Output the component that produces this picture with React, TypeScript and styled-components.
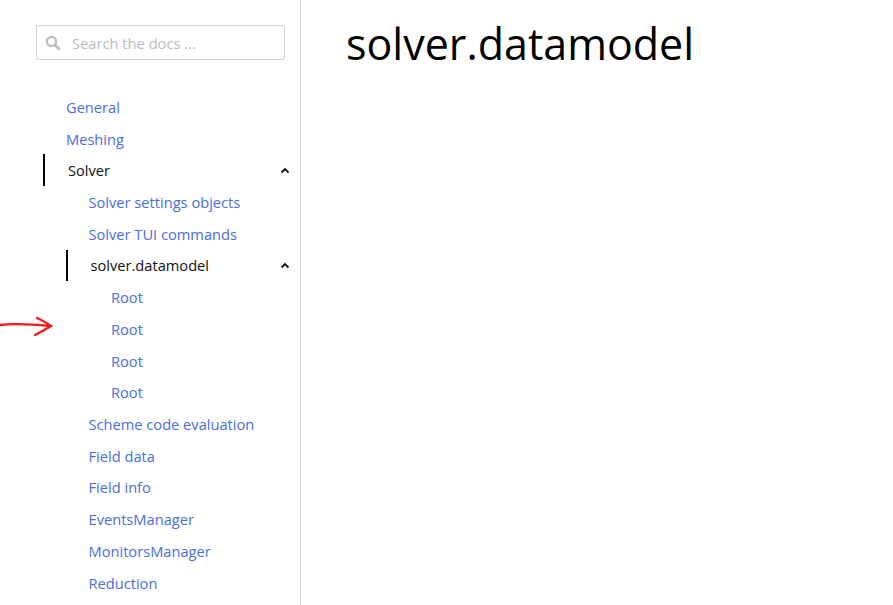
import styled, { createGlobalStyle } from "styled-components";

const GlobalStyle = createGlobalStyle`
  html, body {
    margin: 0;
    padding: 0;
    background: #fff;
    font-family: "Open Sans", "Noto Sans", sans-serif;
  }
`;

const Page = styled.div`
  display: flex;
  width: 893px;
  height: 605px;
  overflow: hidden;
  position: relative;
`;

const Sidebar = styled.aside`
  width: 300px;
  flex-shrink: 0;
  border-right: 1px solid #d0d0d0;
  box-sizing: content-box;
  padding-top: 25px;
`;

const SearchBox = styled.div`
  margin-left: 36px;
  width: 249px;
  height: 35px;
  box-sizing: border-box;
  border: 1px solid #cfcfcf;
  border-radius: 3px;
  display: flex;
  align-items: center;
  padding-left: 8px;
  gap: 11px;
`;

const SearchInput = styled.input`
  border: none;
  outline: none;
  font-family: inherit;
  font-size: 14.7px;
  color: #333;
  width: 180px;
  padding: 0;
  &::placeholder {
    color: #bcbcbc;
  }
`;

const NavList = styled.ul`
  list-style: none;
  margin: 31px 0 0 43px;
  padding: 0;
`;

const NavItem = styled.li<{ $level: number; $active?: boolean }>`
  height: 31.73px;
  display: flex;
  align-items: center;
  justify-content: space-between;
  margin-left: ${(p) => (p.$level - 1) * 22.5}px;
  border-left: 2px solid ${(p) => (p.$active ? "#000" : "transparent")};
  padding-left: ${(p) => (p.$active ? 23 : 21)}px;
  padding-right: 10px;
  font-size: 14.65px;
  color: ${(p) => (p.$active ? "#111" : "#4a6de2")};
  font-weight: ${(p) => (p.$active ? 500 : 400)};
`;

const Main = styled.main`
  flex: 1;
  padding-left: 45px;
`;

const Title = styled.h1`
  margin: 15px 0 0;
  font-size: 43px;
  font-weight: 400;
  line-height: 58px;
  color: #000;
`;

const Annotation = styled.svg`
  position: absolute;
  left: 0;
  top: 314px;
`;

const SearchIcon = () => (
  <svg width="16" height="16" viewBox="0 0 16 16">
    <circle cx="6.5" cy="6.5" r="4.6" fill="none" stroke="#bdbdbd" strokeWidth="2.4" />
    <line x1="10" y1="10" x2="14" y2="14" stroke="#bdbdbd" strokeWidth="2.8" strokeLinecap="round" />
  </svg>
);

const ChevronUp = () => (
  <svg width="10" height="7" viewBox="0 0 10 7">
    <polyline points="1.5,5.5 5,2 8.5,5.5" fill="none" stroke="#111" strokeWidth="1.8" />
  </svg>
);

type Entry = { label: string; level: number; active?: boolean; open?: boolean };

const entries: Entry[] = [
  { label: "General", level: 1 },
  { label: "Meshing", level: 1 },
  { label: "Solver", level: 1, active: true, open: true },
  { label: "Solver settings objects", level: 2 },
  { label: "Solver TUI commands", level: 2 },
  { label: "solver.datamodel", level: 2, active: true, open: true },
  { label: "Root", level: 3 },
  { label: "Root", level: 3 },
  { label: "Root", level: 3 },
  { label: "Root", level: 3 },
  { label: "Scheme code evaluation", level: 2 },
  { label: "Field data", level: 2 },
  { label: "Field info", level: 2 },
  { label: "EventsManager", level: 2 },
  { label: "MonitorsManager", level: 2 },
  { label: "Reduction", level: 2 },
];

export default function App() {
  return (
    <>
      <GlobalStyle />
      <Page>
        <Sidebar>
          <SearchBox>
            <SearchIcon />
            <SearchInput placeholder="Search the docs ..." />
          </SearchBox>
          <NavList>
            {entries.map((e, i) => (
              <NavItem key={i} $level={e.level} $active={e.active}>
                <span>{e.label}</span>
                {e.open && <ChevronUp />}
              </NavItem>
            ))}
          </NavList>
        </Sidebar>
        <Main>
          <Title>solver.datamodel</Title>
        </Main>
        <Annotation width="56" height="26" viewBox="0 0 56 26">
          <path d="M0 11 C 14 9, 30 10, 50 12" fill="none" stroke="#f01818" strokeWidth="2.3" strokeLinecap="round" />
          <path d="M37 4 C 42 6, 47 9, 51 12 C 46 15, 41 18, 35 21" fill="none" stroke="#f01818" strokeWidth="2.3" strokeLinecap="round" />
        </Annotation>
      </Page>
    </>
  );
}
